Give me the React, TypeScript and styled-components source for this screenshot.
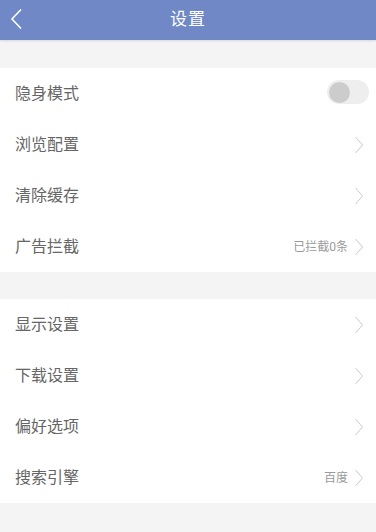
import React, { useState } from 'react'
import styled, { createGlobalStyle } from 'styled-components'

const GlobalStyle = createGlobalStyle`
  html, body {
    margin: 0;
    padding: 0;
    background: #f4f4f4;
    font-family: Roboto, "Noto Sans CJK SC", "Noto Sans", sans-serif;
  }
`

const Page = styled.div`
  width: 376px;
  min-height: 532px;
  background: #f4f4f4;
`

const Header = styled.div`
  position: relative;
  height: 40px;
  display: flex;
  align-items: center;
  justify-content: center;
  background: #7089c6;
  box-shadow: 0 1px 2px rgba(0, 0, 0, 0.12);
`

const BackButton = styled.button`
  position: absolute;
  left: 6px;
  top: 7px;
  width: 20px;
  height: 24px;
  padding: 0;
  border: 0;
  background: transparent;
  display: flex;
  align-items: center;
  justify-content: center;
`

const Title = styled.h1`
  margin: -5px 0 0;
  font-size: 17px;
  font-weight: 400;
  color: #ffffff;
  letter-spacing: 1px;
`

const Group = styled.div<{ $gap: number }>`
  margin-top: ${(p) => p.$gap}px;
  background: #ffffff;
`

const Row = styled.div`
  height: 51px;
  display: flex;
  align-items: center;
  padding: 0 12px 0 15px;
  box-sizing: border-box;
`

const Label = styled.span`
  flex: 1;
  margin-top: -3px;
  font-size: 16px;
  color: #666666;
`

const Extra = styled.span`
  margin-top: -2px;
  margin-right: 6px;
  font-size: 12px;
  color: #9a9a9a;
`

const Track = styled.button`
  width: 42px;
  height: 24px;
  margin-right: -5px;
  margin-top: -3px;
  padding: 0 0 0 2px;
  border: 0;
  border-radius: 12px;
  background: #eeeeee;
  display: flex;
  align-items: center;
`

const Knob = styled.span`
  width: 21px;
  height: 21px;
  border-radius: 50%;
  background: #cccccc;
`

const Chevron = () => (
  <svg width="10" height="18" viewBox="0 0 10 18">
    <path d="M1.5 1 L8.5 9 L1.5 17" fill="none" stroke="#c9c9d4" strokeWidth="1" />
  </svg>
)

type Item = { label: string; extra?: string; toggle?: boolean }

const groups: { gap: number; items: Item[] }[] = [
  {
    gap: 28,
    items: [
      { label: '隐身模式', toggle: true },
      { label: '浏览配置' },
      { label: '清除缓存' },
      { label: '广告拦截', extra: '已拦截0条' },
    ],
  },
  {
    gap: 27,
    items: [
      { label: '显示设置' },
      { label: '下载设置' },
      { label: '偏好选项' },
      { label: '搜索引擎', extra: '百度' },
    ],
  },
]

const App = () => {
  const [hidden, setHidden] = useState(false)

  return (
    <Page>
      <GlobalStyle />
      <Header>
        <BackButton aria-label="back">
          <svg width="14" height="22" viewBox="0 0 14 22">
            <path d="M12 1.5 L3 11 L12 20.5" fill="none" stroke="#ffffff" strokeWidth="1.6" />
          </svg>
        </BackButton>
        <Title>设置</Title>
      </Header>
      {groups.map((g, gi) => (
        <Group key={gi} $gap={g.gap}>
          {g.items.map((item) => (
            <Row key={item.label}>
              <Label>{item.label}</Label>
              {item.extra && <Extra>{item.extra}</Extra>}
              {item.toggle ? (
                <Track onClick={() => setHidden(!hidden)}>
                  <Knob />
                </Track>
              ) : (
                <Chevron />
              )}
            </Row>
          ))}
        </Group>
      ))}
    </Page>
  )
}

export default App
